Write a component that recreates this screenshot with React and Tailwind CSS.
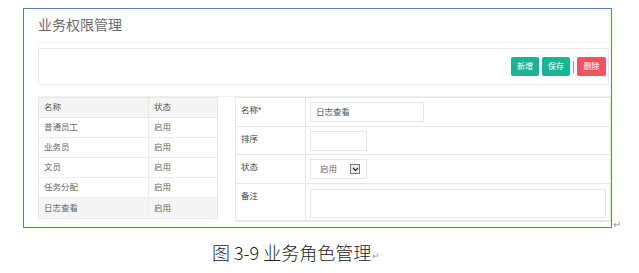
export default function App() {
  const rows = ["普通员工", "业务员", "文员", "任务分配", "日志查看"];
  return (
    <div className="w-[639px] h-[273px] bg-white overflow-hidden" style={{ fontFamily: '"Liberation Sans", "Noto Sans CJK SC", sans-serif' }}>
      <div className="flex items-end pt-[8px] pl-[23px]">
        <div className="w-[589px] h-[220px] border-[1.5px] border-[#4f81bd] overflow-hidden pl-[14px] pr-[2px]">
          <div className="h-[33px] flex items-center text-[14px] text-[#6b6b6b]">业务权限管理</div>
          <div className="h-px bg-[#eeeeee]" />
          <div className="mt-[5px] h-[37px] border border-[#e7eaec] rounded-[2px] flex items-center justify-end pr-[2px] gap-[3px]">
            <div className="w-[28px] h-[19px] rounded-[2px] bg-[#1ab394] text-white text-[8px] flex items-center justify-center">新增</div>
            <div className="w-[28px] h-[19px] rounded-[2px] bg-[#1ab394] text-white text-[8px] flex items-center justify-center">保存</div>
            <div className="w-px h-[12px] bg-[#999]" />
            <div className="w-[29px] h-[19px] rounded-[2px] bg-[#ed5565] text-white text-[8px] flex items-center justify-center">删除</div>
          </div>
          <div className="mt-[11px] h-px bg-[#f0f0f0] -mr-[2px]" />
          <div className="flex gap-[17px] text-[8.5px]">
            <div className="w-[180px] shrink-0 self-start border border-[#e7e7e7] text-[#666]">
              <div className="flex h-[20px] bg-[#f5f5f5] border-b border-[#e7e7e7]">
                <div className="w-[110px] border-r border-[#e7e7e7] pl-[5px] flex items-center text-[#555]">名称</div>
                <div className="pl-[5px] flex items-center text-[#555]">状态</div>
              </div>
              {rows.map((r, i) => (
                <div key={r} className={`flex h-[20px] ${i < rows.length - 1 ? "border-b border-[#ececec]" : ""} ${i === rows.length - 1 ? "bg-[#f5f5f5]" : ""}`}>
                  <div className="w-[110px] border-r border-[#ececec] pl-[5px] flex items-center">{r}</div>
                  <div className="pl-[5px] flex items-center">启用</div>
                </div>
              ))}
            </div>
            <div className="flex-1 border border-[#e7e7e7] text-[#444] -mr-[2px]">
              <div className="flex h-[29px] border-b border-[#e7e7e7]">
                <div className="w-[70px] shrink-0 border-r border-[#e7e7e7] pl-[5px] pt-[6px]">名称*</div>
                <div className="pl-[4px] pt-[4px]">
                  <div className="w-[114px] h-[20px] border border-[#e5e6e7] pl-[5px] flex items-center text-[#555]">日志查看</div>
                </div>
              </div>
              <div className="flex h-[28px] border-b border-[#e7e7e7]">
                <div className="w-[70px] shrink-0 border-r border-[#e7e7e7] pl-[5px] pt-[6px]">排序</div>
                <div className="pl-[4px] pt-[4px]">
                  <div className="w-[57px] h-[20px] border border-[#e5e6e7]" />
                </div>
              </div>
              <div className="flex h-[29px] border-b border-[#e7e7e7]">
                <div className="w-[70px] shrink-0 border-r border-[#e7e7e7] pl-[5px] pt-[6px]">状态</div>
                <div className="pl-[4px] pt-[4px]">
                  <div className="w-[57px] h-[20px] border border-[#e5e6e7] flex items-center pl-[9px] text-[#666]">
                    <span>启用</span>
                    <div className="ml-[13px] w-[10px] h-[10px] border border-[#777] bg-[#eee] flex items-center justify-center">
                      <svg width="7" height="5" viewBox="0 0 7 5"><path d="M1 1 L3.5 3.5 L6 1" stroke="#222" strokeWidth="1.2" fill="none" /></svg>
                    </div>
                  </div>
                </div>
              </div>
              <div className="flex h-[37px] border-b border-[#e7e7e7]">
                <div className="w-[70px] shrink-0 border-r border-[#e7e7e7] pl-[5px] pt-[6px]">备注</div>
                <div className="flex-1 pl-[4px] pt-[5px] pr-[4px]">
                  <div className="h-[29px] border border-[#e5e6e7]" />
                </div>
              </div>
            </div>
          </div>
        </div>
        <span className="text-[#999] text-[10px] leading-none ml-[1px] -mb-[2px]">↵</span>
      </div>
      <div className="mt-[15px] pl-[212px] flex items-end leading-none">
        <span className="whitespace-pre text-[18px] text-[#222]" style={{ fontFamily: '"Noto Sans CJK SC", sans-serif', fontWeight: 300 }}>图 3-9 业务角色管理</span>
        <span className="text-[#999] text-[9px] ml-[1px]">↵</span>
      </div>
    </div>
  );
}
